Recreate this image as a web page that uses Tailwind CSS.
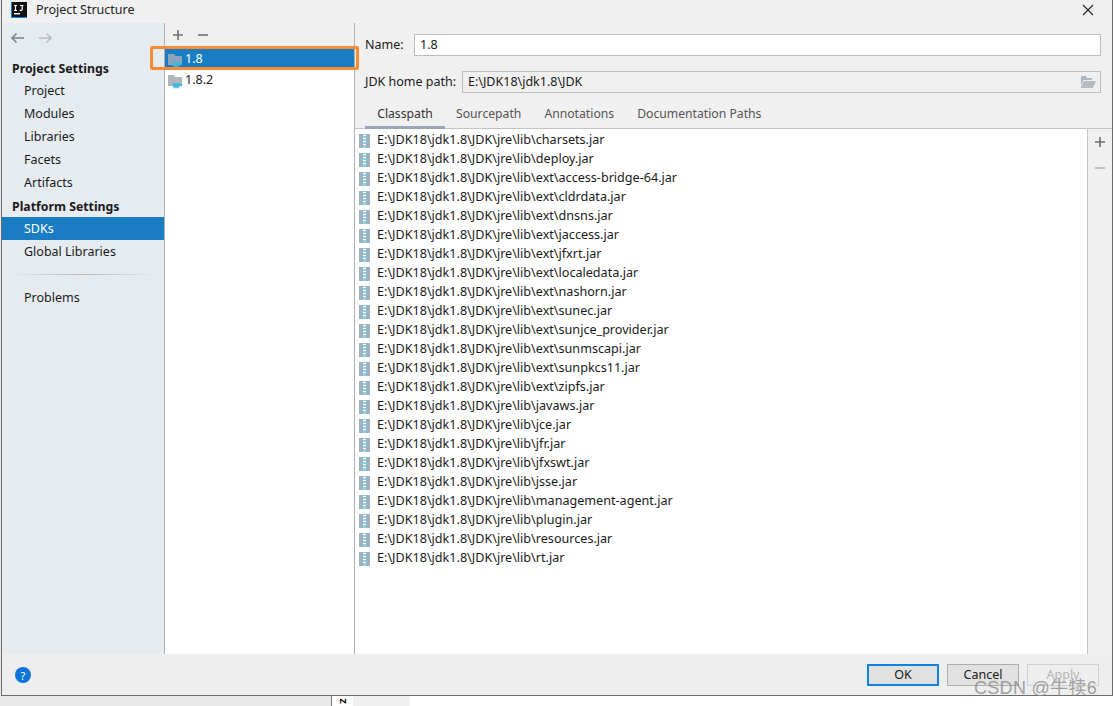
<!DOCTYPE html>
<html lang="en">
<head>
    <meta charset="UTF-8">
    <title>Project Structure</title>
    <script src="https://cdn.jsdelivr.net/npm/@tailwindcss/browser@4"></script>
</head>
<body class="bg-white">
<div class="relative w-[1113px] h-[706px] overflow-hidden bg-[#e9e9e9] font-['Noto_Sans','Open_Sans',sans-serif] text-[12.5px] text-[#1a1a1a]">

    <!-- Dialog -->
    <div class="flex flex-col w-[1112px] h-[696px] ml-px bg-[#f0f0f0] border-l border-r border-b border-[#6b6b6b]">

        <!-- Title bar -->
        <div class="flex items-center h-[23px] shrink-0 pl-[9px] pr-[18px] pb-[4px]">
            <svg width="16" height="16" viewBox="0 0 16 16">
                <rect x="0" y="0" width="16" height="16" fill="#0a84e0"/>
                <rect x="1" y="0" width="15" height="15" fill="#111"/>
                <rect x="3" y="11" width="6" height="1.4" fill="#fff"/>
                <path d="M3 3.500h3M4.500 3.500v5M3 8.500h3M9 3.500h3.500M11.200 3.500v4c0 1-1.500 1.200-2.500.6" stroke="#fff" stroke-width="1.200" fill="none"/>
            </svg>
            <span class="ml-[9px] mt-[2px] text-[#222]">Project Structure</span>
            <svg class="ml-auto" width="12" height="12" viewBox="0 0 12 12"><path d="M1 1l10 10M11 1L1 11" stroke="#222" stroke-width="1.100"/></svg>
        </div>

        <!-- Main -->
        <div class="flex flex-1 min-h-0">

            <!-- Sidebar -->
            <div class="flex flex-col w-[162px] shrink-0 bg-[#e6ebf0]">
                <div class="flex items-center gap-[13px] h-[26px] pl-[8px] pt-[3px]">
                    <svg width="15" height="12" viewBox="0 0 15 12"><path d="M14 6H2M6.500 1.500L2 6l4.500 4.500" stroke="#7d8287" stroke-width="1.600" fill="none"/></svg>
                    <svg width="15" height="12" viewBox="0 0 15 12"><path d="M1 6h12M8.500 1.500L13 6l-4.500 4.500" stroke="#bcc0c4" stroke-width="1.600" fill="none"/></svg>
                </div>
                <div class="h-[22px] mt-[8px] pl-[10px] leading-[23px] font-bold text-[12.3px]">Project Settings</div>
                <div class="h-[23px] pl-[22px] leading-[23px]">Project</div>
                <div class="h-[23px] pl-[22px] leading-[23px]">Modules</div>
                <div class="h-[23px] pl-[22px] leading-[23px]">Libraries</div>
                <div class="h-[23px] pl-[22px] leading-[23px]">Facets</div>
                <div class="h-[23px] pl-[22px] leading-[23px]">Artifacts</div>
                <div class="h-[23px] pl-[10px] leading-[25px] font-bold text-[12.3px]">Platform Settings</div>
                <div class="h-[23px] pl-[22px] leading-[23px] bg-[#1a7dc4] text-white">SDKs</div>
                <div class="h-[23px] pl-[22px] leading-[23px]">Global Libraries</div>
                <div class="h-px mt-[11px] mx-[8px] bg-linear-to-r from-transparent via-[#b4b6b8] to-transparent"></div>
                <div class="h-[23px] mt-[11px] pl-[22px] leading-[23px]">Problems</div>
            </div>

            <!-- SDK list -->
            <div class="flex flex-col w-[191px] shrink-0 bg-white border-l border-r border-[#aeb0b2]">
                <div class="flex items-center gap-[13px] h-[23px] pl-[7px] bg-[#f0f0f0]">
                    <svg width="12" height="12" viewBox="0 0 12 12"><path d="M6 1v10M1 6h10" stroke="#6e6e6e" stroke-width="1.600"/></svg>
                    <svg width="12" height="12" viewBox="0 0 12 12"><path d="M1 6h10" stroke="#6e6e6e" stroke-width="1.600"/></svg>
                </div>
                <div class="h-[3px] bg-[#f0f0f0]"></div>
                <div class="flex items-center h-[21px] pl-[3px] bg-[#1a7dc4] text-white">
                    <svg width="16" height="16" viewBox="0 0 16 16"><path d="M0 2h6l1.500 2H14v9H0z" fill="#8aa5bb"/><path d="M5 10.500h6.500v2.200c0 1-.8 1.800-1.800 1.800H6.800c-1 0-1.800-.8-1.800-1.800zM11.500 11h2.500v1.800h-2.500M4 15h8" fill="#40b6e0" stroke="#40b6e0" stroke-width=".4"/></svg>
                    <span class="ml-[1px]">1.8</span>
                </div>
                <div class="flex items-center h-[21px] pl-[3px]">
                    <svg width="16" height="16" viewBox="0 0 16 16"><path d="M0 2h6l1.500 2H14v9H0z" fill="#afb7bd"/><path d="M5 10.500h6.500v2.200c0 1-.8 1.800-1.800 1.800H6.800c-1 0-1.800-.8-1.800-1.800zM11.500 11h2.500v1.800h-2.500M4 15h8" fill="#40b6e0" stroke="#40b6e0" stroke-width=".4"/></svg>
                    <span class="ml-[1px]">1.8.2</span>
                </div>
            </div>

            <!-- Detail -->
            <div class="flex flex-col flex-1 min-w-0">
                <div class="flex items-center h-[22px] mt-[11px] pl-[10px] pr-[11px]">
                    <span class="w-[49px] shrink-0">Name:</span>
                    <div class="flex-1 h-[22px] pl-[5px] leading-[20px] bg-white border border-[#bdbdbd]">1.8</div>
                </div>
                <div class="flex items-center h-[22px] mt-[15px] pl-[10px] pr-[11px]">
                    <span class="w-[97px] shrink-0">JDK home path:</span>
                    <div class="flex flex-1 items-center h-[22px] pl-[5px] pr-[4px] border border-[#bdbdbd]">
                        <span>E:\JDK18\jdk1.8\JDK</span>
                        <svg class="ml-auto" width="16" height="12" viewBox="0 0 16 12"><path d="M1 0h5l1 2h5v2H3.500L1 10z" fill="#a9b7c2"/><path d="M4 5h12l-3 7H0.500z" fill="#b4bcc2"/></svg>
                    </div>
                </div>

                <!-- Tabs -->
                <div class="flex h-[28px] mt-[8px] pl-[10px] text-[12.2px] text-[#555] border-b border-[#c4c4c4]">
                    <div class="flex items-center justify-center w-[80px] h-[28px] border-b-[3px] border-[#9aa7b8] pt-[2px] text-[#333]">Classpath</div>
                    <div class="flex items-center h-[27px] ml-[11px]">Sourcepath</div>
                    <div class="flex items-center h-[27px] ml-[23px]">Annotations</div>
                    <div class="flex items-center h-[27px] ml-[23px]">Documentation Paths</div>
                </div>

                <!-- Classpath list -->
                <div class="flex flex-1 min-h-0">
                    <div id="jars" class="flex-1 min-w-0 pt-[2px] bg-white text-[12.6px]"></div>
                    <div class="flex flex-col items-center w-[25px] shrink-0 border-l border-[#c4c4c4] pt-[7px] gap-[14px]">
                        <svg width="12" height="12" viewBox="0 0 12 12"><path d="M6 1v10M1 6h10" stroke="#6e6e6e" stroke-width="1.600"/></svg>
                        <svg width="12" height="12" viewBox="0 0 12 12"><path d="M1 6h10" stroke="#b8b8b8" stroke-width="1.600"/></svg>
                    </div>
                </div>
            </div>
        </div>

        <!-- Bottom bar -->
        <div class="flex items-center h-[41px] shrink-0 pl-[13px] pr-[13px] pt-[1px] bg-[#eeeeee]">
            <div class="flex items-center justify-center w-4 h-4 rounded-full bg-[#0f74d8] text-white text-[11px] leading-none">?</div>
            <div class="flex items-center justify-center ml-auto w-[72px] h-[22px] bg-[#e1e1e1] border-2 border-[#0f82e0]">OK</div>
            <div class="flex items-center justify-center ml-[8px] w-[72px] h-[22px] bg-[#e1e1e1] border border-[#adadad]">Cancel</div>
            <div class="flex items-center justify-center ml-[8px] w-[72px] h-[22px] bg-[#eeeeee] border border-[#cfcfcf] text-[#b5b5b5]">Apply</div>
        </div>
    </div>

    <!-- Window behind the dialog -->
    <div class="flex h-[10px] bg-[#e9e9e9]">
        <div class="w-[331px] h-full"></div>
        <div class="flex justify-center w-[22px] h-full bg-white border-l border-[#777] text-[9px] font-bold leading-[10px] text-black"><span class="rotate-90">Z</span></div>
        <div class="w-[57px] h-full bg-[#f0f0f0]"></div>
        <div class="flex-1 h-full bg-white"></div>
    </div>

    <!-- Annotation over the selected row -->
    <div class="absolute left-[150px] top-[46px] w-[209px] h-[24px] rounded-[2px] border-[3px] border-[#f98c33]"></div>

    <!-- Watermark -->
    <div class="absolute left-[974px] top-[676px] text-[18px] leading-[24px] tracking-[0.3px] text-[#8b8b8b]/80 font-['Liberation_Sans','Noto_Sans_CJK_SC',sans-serif]">CSDN @牛犊6</div>
</div>

<script>
    const jars = ['charsets', 'deploy', 'ext\\access-bridge-64', 'ext\\cldrdata', 'ext\\dnsns', 'ext\\jaccess', 'ext\\jfxrt',
        'ext\\localedata', 'ext\\nashorn', 'ext\\sunec', 'ext\\sunjce_provider', 'ext\\sunmscapi', 'ext\\sunpkcs11', 'ext\\zipfs',
        'javaws', 'jce', 'jfr', 'jfxswt', 'jsse', 'management-agent', 'plugin', 'resources', 'rt'];
    const icon = '<svg class="shrink-0 mr-[7px]" width="11" height="14" viewBox="0 0 11 14"><rect width="11" height="14" fill="#9fb2c0"/><rect x="4" width="3" height="14" fill="#8ed0e8"/><path d="M4 1.500h3M4 4.500h3M4 7.500h3M4 10.500h3" stroke="#fff" stroke-width="1"/></svg>';
    document.getElementById('jars').innerHTML = jars.map(function (name) {
        return '<div class="flex items-center h-[19px] pl-[4px]">' + icon + '<span>E:\\JDK18\\jdk1.8\\JDK\\jre\\lib\\' + name + '.jar</span></div>';
    }).join('');
</script>
</body>
</html>
